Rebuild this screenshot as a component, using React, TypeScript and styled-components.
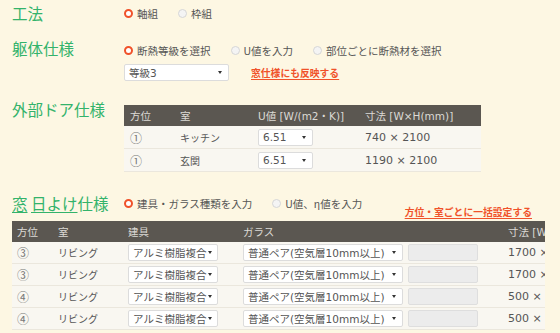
import React from 'react'
import styled, { createGlobalStyle } from 'styled-components'

const GlobalStyle = createGlobalStyle`
  html, body {
    margin: 0;
    background: #fdf7e3;
  }
  body {
    font-family: "DejaVu Sans", "Noto Sans CJK JP", sans-serif;
    font-size: 10px;
    color: #555;
  }
`

const Page = styled.div`
  padding: 3px 0 0 12px;
  width: 560px;
  height: 333px;
  overflow: hidden;
  box-sizing: border-box;
`

const Row = styled.div<{ $mt?: number }>`
  display: flex;
  align-items: flex-start;
  margin-top: ${(p) => p.$mt || 0}px;
`

const Heading = styled.h2`
  flex: none;
  width: 112px;
  margin: 0;
  font-family: "Noto Sans CJK JP", sans-serif;
  font-size: 15.5px;
  font-weight: 400;
  line-height: 20px;
  color: #33b36b;
`

const HeadLink = styled.span`
  text-decoration: underline;
  text-underline-offset: 2px;
`

const Content = styled.div<{ $pt?: number }>`
  display: flex;
  flex-direction: column;
  padding-top: ${(p) => p.$pt || 0}px;
`

const RadioGroup = styled.div`
  display: flex;
  align-items: center;
  gap: 20px;
  height: 20px;
`

const RadioLabel = styled.label`
  display: flex;
  align-items: center;
  gap: 4px;
  font-family: "Noto Sans CJK JP", sans-serif;
  font-size: 10.5px;
  color: #555;
  white-space: nowrap;
`

const RadioDot = styled.span<{ $on?: boolean }>`
  width: 9px;
  height: 9px;
  border-radius: 50%;
  box-sizing: border-box;
  background: ${(p) => (p.$on ? '#fff' : '#f4f4f4')};
  border: ${(p) => (p.$on ? '2.5px solid #f0522a' : '1px solid #d6d6d6')};
`

const SelectLine = styled.div`
  display: flex;
  align-items: center;
  gap: 22px;
  margin-top: 4px;
`

const FakeSelect = styled.div<{ $w: number }>`
  display: flex;
  align-items: center;
  justify-content: space-between;
  width: ${(p) => p.$w}px;
  height: 17px;
  box-sizing: border-box;
  padding: 0 6px 0 4px;
  background: #fff;
  border: 1px solid #dcdcdc;
  border-radius: 2px;
  font-size: 10.5px;
  color: #555;
  white-space: nowrap;
  overflow: hidden;
`

const Caret = styled.span`
  flex: none;
  margin-left: 2px;
  width: 0;
  height: 0;
  border-left: 2.5px solid transparent;
  border-right: 2.5px solid transparent;
  border-top: 3px solid #333;
`

const OrangeLink = styled.a<{ $mt?: number; $mr?: number }>`
  color: #f0522a;
  font-family: "Noto Sans CJK JP", sans-serif;
  font-weight: 700;
  font-size: 9.8px;
  text-decoration: underline;
  text-underline-offset: 2px;
  line-height: 12px;
  white-space: nowrap;
  margin-top: ${(p) => p.$mt || 0}px;
  ${(p) => (p.$mr ? `margin-left: auto; margin-right: ${p.$mr}px;` : '')}
`

const Table = styled.table<{ $w: number }>`
  border-collapse: collapse;
  table-layout: fixed;
  width: ${(p) => p.$w}px;
  flex: none;
`

const Th = styled.th<{ $w?: number; $pl?: number }>`
  ${(p) => (p.$w ? `width: ${p.$w}px;` : '')}
  height: 21px;
  padding: 0 0 0 ${(p) => p.$pl ?? 0}px;
  background: #5b5751;
  color: #dcdad5;
  font-weight: 400;
  font-size: 10.5px;
  text-align: left;
  white-space: nowrap;
  overflow: hidden;
`

const Td = styled.td<{ $h: number; $pl?: number; $fs?: number }>`
  height: ${(p) => p.$h}px;
  padding: 0 0 0 ${(p) => p.$pl ?? 0}px;
  background: #f9f7f1;
  border-bottom: 1px solid #ebe7dd;
  white-space: nowrap;
  overflow: hidden;
  font-size: ${(p) => p.$fs || 10}px;
  color: #555;
`

const DirCell = styled(Td)`
  font-family: "Noto Sans CJK JP", sans-serif;
  font-size: 12px;
  color: #777;
`

const BlankInput = styled.div`
  width: 70px;
  height: 17px;
  box-sizing: border-box;
  background: #ececec;
  border: 1px solid #dedede;
  border-radius: 2px;
`

const Clip = styled.div`
  width: 533px;
  overflow: hidden;
`

const Section4Top = styled.div`
  display: flex;
  align-items: flex-start;
  height: 28px;
  margin-top: 21px;
`

const doors = [
  { dir: '①', room: 'キッチン', u: '6.51', size: '740 × 2100' },
  { dir: '①', room: '玄関', u: '6.51', size: '1190 × 2100' },
]

const windows = [
  { dir: '③', size: '1700 × 1100' },
  { dir: '③', size: '1700 × 1100' },
  { dir: '④', size: '500 × 1100' },
  { dir: '④', size: '500 × 1100' },
]

const Radio = ({ on, label }: { on?: boolean; label: string }) => (
  <RadioLabel>
    <RadioDot $on={on} />
    {label}
  </RadioLabel>
)

const App = () => {
  return (
    <Page>
      <GlobalStyle />
      <Row>
        <Heading>工法</Heading>
        <RadioGroup>
          <Radio on label="軸組" />
          <Radio label="枠組" />
        </RadioGroup>
      </Row>

      <Row $mt={15}>
        <Heading>躯体仕様</Heading>
        <Content $pt={2}>
          <RadioGroup>
            <Radio on label="断熱等級を選択" />
            <Radio label="U値を入力" />
            <Radio label="部位ごとに断熱材を選択" />
          </RadioGroup>
          <SelectLine>
            <FakeSelect $w={105}>
              <span>等級3</span>
              <Caret />
            </FakeSelect>
            <OrangeLink>窓仕様にも反映する</OrangeLink>
          </SelectLine>
        </Content>
      </Row>

      <Row $mt={18}>
        <Heading>外部ドア仕様</Heading>
        <Content $pt={6}>
          <Table $w={357}>
            <thead>
              <tr>
                <Th $w={50} $pl={6}>方位</Th>
                <Th $w={78}>室</Th>
                <Th $w={107}>U値 [W/(m2・K)]</Th>
                <Th>寸法 [W×H(mm)]</Th>
              </tr>
            </thead>
            <tbody>
              {doors.map((d, i) => (
                <tr key={i}>
                  <DirCell $h={22} $pl={6}>{d.dir}</DirCell>
                  <Td $h={22}>{d.room}</Td>
                  <Td $h={22}>
                    <FakeSelect $w={55}>
                      <span>{d.u}</span>
                      <Caret />
                    </FakeSelect>
                  </Td>
                  <Td $h={22} $fs={11}>{d.size}</Td>
                </tr>
              ))}
            </tbody>
          </Table>
        </Content>
      </Row>

      <Section4Top>
        <Heading>
          <HeadLink>窓</HeadLink> <HeadLink>日よけ</HeadLink>仕様
        </Heading>
        <RadioGroup>
          <Radio on label="建具・ガラス種類を入力" />
          <Radio label="U値、η値を入力" />
        </RadioGroup>
        <OrangeLink $mt={13} $mr={28}>
          方位・室ごとに一括設定する
        </OrangeLink>
      </Section4Top>
      <Clip>
        <Table $w={600}>
          <thead>
            <tr>
              <Th $w={41} $pl={5}>方位</Th>
              <Th $w={70}>室</Th>
              <Th $w={115}>建具</Th>
              <Th $w={165}>ガラス</Th>
              <Th $w={100}></Th>
              <Th>寸法 [W×H(mm)]</Th>
            </tr>
          </thead>
          <tbody>
            {windows.map((w, i) => (
              <tr key={i}>
                <DirCell $h={21} $pl={5}>{w.dir}</DirCell>
                <Td $h={21}>リビング</Td>
                <Td $h={21}>
                  <FakeSelect $w={90}>
                    <span>アルミ樹脂複合</span>
                    <Caret />
                  </FakeSelect>
                </Td>
                <Td $h={21}>
                  <FakeSelect $w={160}>
                    <span>普通ペア(空気層10mm以上)</span>
                    <Caret />
                  </FakeSelect>
                </Td>
                <Td $h={21}>
                  <BlankInput />
                </Td>
                <Td $h={21} $fs={11}>{w.size}</Td>
              </tr>
            ))}
          </tbody>
        </Table>
      </Clip>
    </Page>
  )
}

export default App
